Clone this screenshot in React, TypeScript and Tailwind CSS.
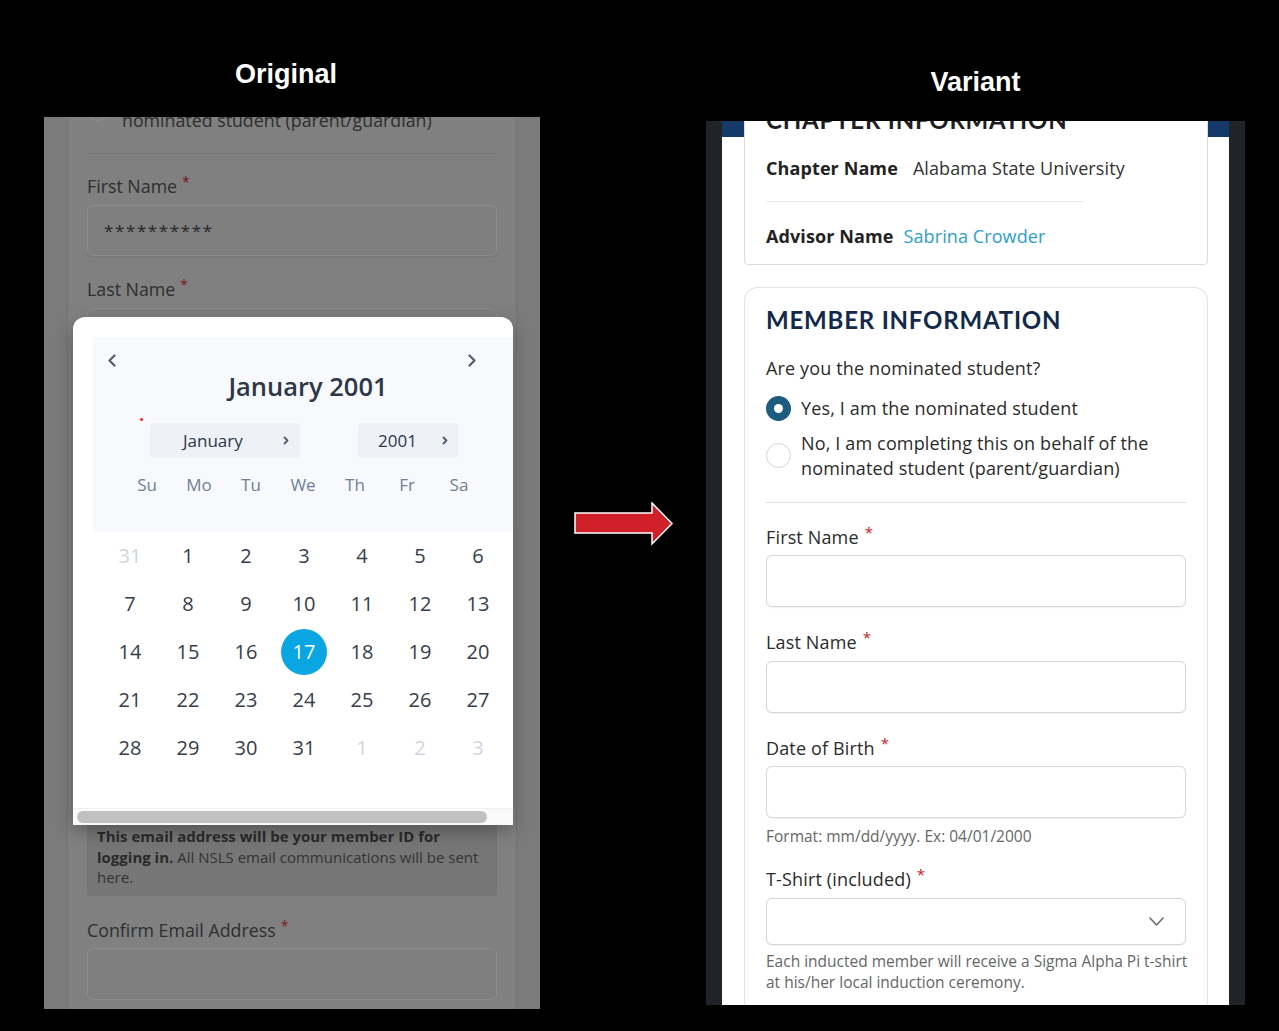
import React from 'react'

type Day = { d: number; muted?: boolean }

const weeks: Day[][] = [
  [{ d: 31, muted: true }, { d: 1 }, { d: 2 }, { d: 3 }, { d: 4 }, { d: 5 }, { d: 6 }],
  [{ d: 7 }, { d: 8 }, { d: 9 }, { d: 10 }, { d: 11 }, { d: 12 }, { d: 13 }],
  [{ d: 14 }, { d: 15 }, { d: 16 }, { d: 17 }, { d: 18 }, { d: 19 }, { d: 20 }],
  [{ d: 21 }, { d: 22 }, { d: 23 }, { d: 24 }, { d: 25 }, { d: 26 }, { d: 27 }],
  [{ d: 28 }, { d: 29 }, { d: 30 }, { d: 31 }, { d: 1, muted: true }, { d: 2, muted: true }, { d: 3, muted: true }],
]

const weekdays = ['Su', 'Mo', 'Tu', 'We', 'Th', 'Fr', 'Sa']

function Chevron({ dir, w, h, color, sw = 2 }: { dir: 'left' | 'right' | 'down'; w: number; h: number; color: string; sw?: number }) {
  const d =
    dir === 'left' ? `M${w - 1.5} 1.5 L1.5 ${h / 2} L${w - 1.5} ${h - 1.5}`
    : dir === 'right' ? `M1.5 1.5 L${w - 1.5} ${h / 2} L1.5 ${h - 1.5}`
    : `M1 1 L${w / 2} ${h - 1} L${w - 1} 1`
  return (
    <svg width={w} height={h} viewBox={`0 0 ${w} ${h}`} fill="none" className="shrink-0">
      <path d={d} stroke={color} strokeWidth={sw} strokeLinecap="round" strokeLinejoin="round" />
    </svg>
  )
}

function DimLabel({ text }: { text: string }) {
  return (
    <div className="h-[24px] whitespace-nowrap text-[17.8px] leading-[24px] text-[#2e2e2e]">
      {text}
      <span className="relative top-[-6px] ml-[5px] text-[14px] text-[#7d1616]">*</span>
    </div>
  )
}

function DimInput({ children }: { children?: React.ReactNode }) {
  return (
    <div className="mt-[7px] flex h-[51px] shrink-0 items-center rounded-[6px] border border-[#8c8c8c] bg-[#7f7f7f] pl-[16px] shadow-[0_1px_2px_rgba(0,0,0,0.08)]">
      {children}
    </div>
  )
}

function CalendarPopup() {
  return (
    <div className="absolute left-[29px] top-[200px] flex h-[508px] w-[440px] flex-col overflow-hidden rounded-t-[12px] bg-white shadow-[0_6px_18px_rgba(0,0,0,0.28)]">
      <div className="h-[491px] overflow-hidden pl-[20px] pt-[20px]">
        <div className="w-[430px]">
          <div className="h-[195px] w-[430px] bg-[#f7f9fc] pt-[17px]">
            <div className="flex h-[13px] items-center">
              <div className="ml-[15px]"><Chevron dir="left" w={8} h={13} color="#4f5b6e" sw={2.2} /></div>
              <div className="ml-auto mr-[47px]"><Chevron dir="right" w={8} h={13} color="#4f5b6e" sw={2.2} /></div>
            </div>
            <div className="mt-[3px] h-[32px] text-center text-[25.5px] font-semibold leading-[32px] text-[#2d3748]">January 2001</div>
            <div className="mt-[21px] flex items-start">
              <div className="ml-[47px] mt-[-5px] h-[3px] w-[3px] rounded-full bg-[#ff2020]" />
              <div className="ml-[7px] flex h-[35px] w-[150px] items-center rounded-[4px] bg-[#eef1f6]">
                <span className="pl-[33px] text-[17px] text-[#2d3748]">January</span>
                <div className="ml-auto mr-[11px]"><Chevron dir="right" w={6} h={9} color="#4f5b6e" sw={1.8} /></div>
              </div>
              <div className="ml-[58px] flex h-[35px] w-[100px] items-center rounded-[4px] bg-[#eef1f6]">
                <span className="pl-[20px] text-[17px] text-[#2d3748]">2001</span>
                <div className="ml-auto mr-[10px]"><Chevron dir="right" w={6} h={9} color="#4f5b6e" sw={1.8} /></div>
              </div>
            </div>
            <div className="mt-[15px] grid grid-cols-[repeat(7,52px)] pl-[28px]">
              {weekdays.map((w) => (
                <div key={w} className="h-[24px] text-center text-[17px] leading-[24px] text-[#718096]">{w}</div>
              ))}
            </div>
          </div>
          <div className="ml-[8px] grid grid-cols-[repeat(7,58px)] grid-rows-[repeat(5,48px)]">
            {weeks.flat().map((day, i) => (
              <div key={i} className="flex items-center justify-center">
                {day.d === 17 && !day.muted ? (
                  <div className="flex h-[46px] w-[46px] items-center justify-center rounded-full bg-[#0aa6e1] text-[20px] text-white">17</div>
                ) : (
                  <span className={day.muted ? 'text-[20px] text-[#cfd6df]' : 'text-[20px] text-[#363d4a]'}>{day.d}</span>
                )}
              </div>
            ))}
          </div>
        </div>
      </div>
      <div className="flex h-[17px] items-center border-t border-[#efefef] bg-[#fafafa] pl-[4px]">
        <div className="h-[12px] w-[410px] rounded-full bg-[#c1c1c1]" />
      </div>
    </div>
  )
}

function OriginalPanel() {
  return (
    <div className="relative h-[892px] w-[496px] overflow-hidden bg-[#7b7b7b] font-['Open_Sans',sans-serif]">
      <div className="mx-[23px] flex h-full flex-col border-x border-[#737373] bg-[#808080] px-[19px]">
        <div className="mt-[-34px] flex items-center">
          <div className="ml-[-2px] h-[25px] w-[25px] shrink-0 rounded-full border border-[#8e8e8e]" />
          <div className="ml-[12px] whitespace-nowrap text-[17.8px] leading-[25px] text-[#2e2e2e]">
            No, I am completing this on behalf of the<br />nominated student (parent/guardian)
          </div>
        </div>
        <div className="mt-[20px] border-t border-[#757575]" />
        <div className="mt-[20px]"><DimLabel text="First Name" /></div>
        <DimInput><span className="text-[17px] tracking-[1.6px] text-[#262626]">**********</span></DimInput>
        <div className="mt-[21px]"><DimLabel text="Last Name" /></div>
        <DimInput />
        <div className="flex h-[457px] shrink-0 flex-col overflow-hidden pt-[24px]">
          <DimLabel text="Date of Birth" />
          <DimInput />
          <div className="mt-[24px]"><DimLabel text="Email Address" /></div>
          <DimInput />
        </div>
        <div className="shrink-0 rounded-[4px] bg-[#767676] px-[10px] pb-[8px] pt-[10px] text-[15px] leading-[20.5px] text-[#333]">
          <div className="whitespace-nowrap font-bold text-[#2a2a2a]">This email address will be your member ID for</div>
          <div className="whitespace-nowrap"><span className="font-bold text-[#2a2a2a]">logging in.</span> All NSLS email communications will be sent</div>
          <div>here.</div>
        </div>
        <div className="mt-[22px]"><DimLabel text="Confirm Email Address" /></div>
        <div className="mt-[6px] h-[52px] shrink-0 rounded-[6px] border border-[#8c8c8c] bg-[#7f7f7f]" />
      </div>
      <CalendarPopup />
    </div>
  )
}

function Label({ text }: { text: string }) {
  return (
    <div className="h-[24px] whitespace-nowrap text-[18px] leading-[24px] tracking-[0.15px] text-[#2b2b2b]">
      {text}
      <span className="relative top-[-6px] ml-[6px] text-[15px] text-[#c8202e]">*</span>
    </div>
  )
}

function FieldBox({ mt }: { mt: string }) {
  return <div className={`${mt} h-[52px] shrink-0 rounded-[6px] border border-[#d6d6d6] shadow-[0_1px_2px_rgba(0,0,0,0.06)]`} />
}

function VariantPanel() {
  return (
    <div className="h-[884px] w-[539px] overflow-hidden bg-[#202328] px-[16px]">
      <div className="h-full bg-white font-['Open_Sans',sans-serif]">
        <div className="flex flex-col bg-[linear-gradient(to_bottom,#15396a_16px,#ffffff_16px)] pl-[22px] pr-[21px]">
          <div className="mt-[-20px] flex flex-col rounded-b-[4px] border border-[#dcdcdc] bg-white px-[21px] pb-[16px] pt-[2px]">
            <div className="h-[32px] whitespace-nowrap font-['Lato',sans-serif] text-[24px] font-bold uppercase leading-[32px] tracking-[0.8px] text-[#1e1e24]">
              Chapter Information
            </div>
            <div className="mt-[20px] flex h-[24px] items-center whitespace-nowrap text-[18px] tracking-[0.1px]">
              <span className="font-bold text-[#222]">Chapter Name</span>
              <span className="ml-[15px] text-[#333]">Alabama State University</span>
            </div>
            <div className="mt-[21px] w-[317px] border-t border-[#e6e6e6]" />
            <div className="mt-[22px] flex h-[24px] items-center whitespace-nowrap text-[18px] tracking-[0.1px]">
              <span className="font-bold text-[#222]">Advisor Name</span>
              <span className="ml-[10px] text-[#2ca0cc]">Sabrina Crowder</span>
            </div>
          </div>

          <div className="mt-[22px] flex flex-col rounded-t-[14px] border border-b-0 border-[#e2e2e2] px-[21px] pb-[40px] pt-[16px]">
            <div className="h-[32px] whitespace-nowrap font-['Lato',sans-serif] text-[24px] font-bold uppercase leading-[32px] tracking-[0.8px] text-[#13294b]">
              Member Information
            </div>
            <div className="mt-[20px] h-[24px] whitespace-nowrap text-[18px] leading-[24px] tracking-[0.15px] text-[#2b2b2b]">Are you the nominated student?</div>
            <div className="mt-[15px] flex h-[26px] items-center">
              <div className="flex h-[25px] w-[25px] shrink-0 items-center justify-center rounded-full bg-[#1d5b7f]">
                <div className="h-[9px] w-[9px] rounded-full bg-white" />
              </div>
              <span className="ml-[10px] whitespace-nowrap text-[18px] tracking-[0.15px] text-[#2b2b2b]">Yes, I am the nominated student</span>
            </div>
            <div className="mt-[9.5px] flex items-center">
              <div className="h-[25px] w-[25px] shrink-0 rounded-full border-[1.5px] border-[#d4d4d4]" />
              <span className="ml-[10px] whitespace-nowrap text-[18px] leading-[25px] tracking-[0.15px] text-[#2b2b2b]">
                No, I am completing this on behalf of the<br />nominated student (parent/guardian)
              </span>
            </div>
            <div className="mt-[21px] border-t border-[#e0e0e0]" />

            <div className="mt-[22px]"><Label text="First Name" /></div>
            <FieldBox mt="mt-[6px]" />

            <div className="mt-[23px]"><Label text="Last Name" /></div>
            <FieldBox mt="mt-[7px]" />

            <div className="mt-[23px]"><Label text="Date of Birth" /></div>
            <FieldBox mt="mt-[6px]" />
            <div className="mt-[7px] h-[22px] whitespace-nowrap text-[15.5px] leading-[22px] text-[#666]">Format: mm/dd/yyyy. Ex: 04/01/2000</div>

            <div className="mt-[20px]"><Label text="T-Shirt (included)" /></div>
            <div className="mt-[7px] flex h-[47px] shrink-0 items-center rounded-[6px] border border-[#d6d6d6] pr-[21px] shadow-[0_1px_2px_rgba(0,0,0,0.06)]">
              <div className="ml-auto"><Chevron dir="down" w={15} h={9} color="#6b6b6b" sw={1.6} /></div>
            </div>
            <div className="mt-[6px] text-[15.5px] leading-[21px] text-[#666]">
              <div className="whitespace-nowrap">Each inducted member will receive a Sigma Alpha Pi t-shirt</div>
              <div>at his/her local induction ceremony.</div>
            </div>
          </div>
        </div>
      </div>
    </div>
  )
}

export default function App() {
  return (
    <div className="flex h-[1031px] w-[1279px] items-start overflow-hidden bg-black">
      <div className="ml-[44px] w-[496px]">
        <div className="h-[117px] pr-[12px] pt-[58px] text-center font-['Liberation_Sans',Arial,sans-serif] text-[27px] font-bold leading-[32px] text-white">
          Original
        </div>
        <OriginalPanel />
      </div>

      <div className="w-[166px] pl-[34px] pt-[502px]">
        <svg width="100" height="44" viewBox="0 0 100 44">
          <polygon points="1,11 78,11 78,1 98,21.5 78,42 78,31 1,31" fill="#d0202a" stroke="#ffffff" strokeWidth="1.5" strokeLinejoin="miter" />
        </svg>
      </div>

      <div className="w-[539px]">
        <div className="h-[121px] pt-[66px] text-center font-['Liberation_Sans',Arial,sans-serif] text-[27px] font-bold leading-[32px] text-white">
          Variant
        </div>
        <VariantPanel />
      </div>
    </div>
  )
}
